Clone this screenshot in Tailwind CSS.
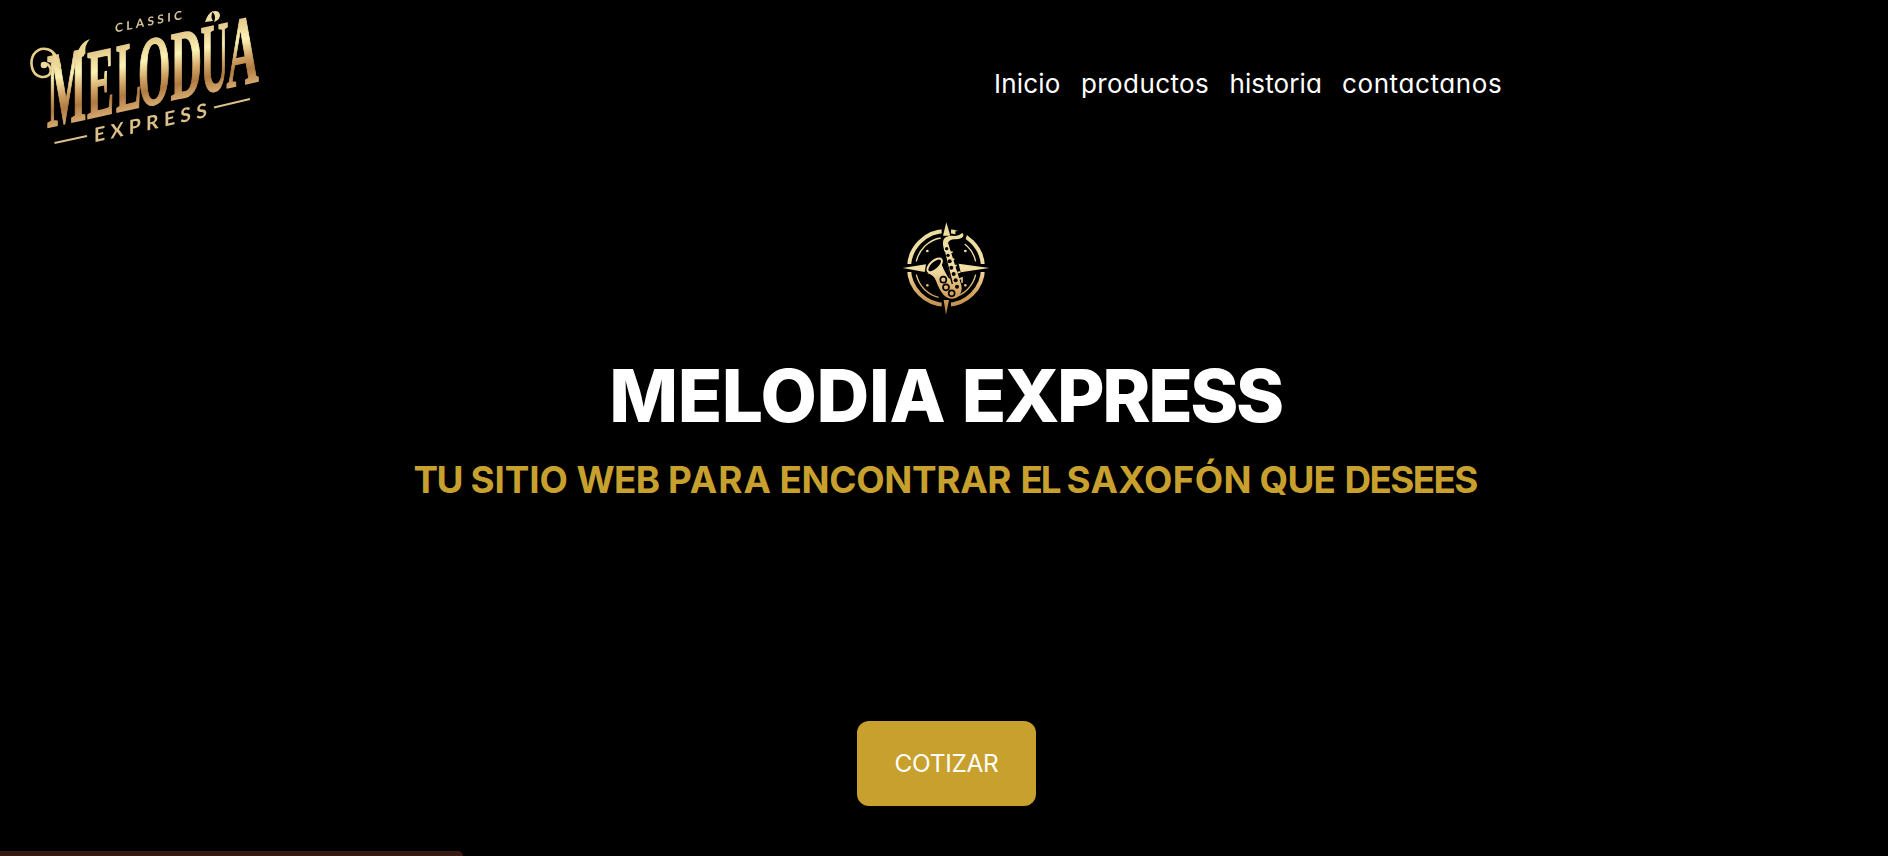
<!DOCTYPE html>
<html lang="es">
<head>
<meta charset="utf-8">
<title>Melodia Express</title>
<script src="https://cdn.jsdelivr.net/npm/@tailwindcss/browser@4"></script>
</head>
<body class="flex h-screen flex-col overflow-hidden bg-black font-[Inter,sans-serif] text-white">

<header class="flex h-[160px] shrink-0 items-start">
  <svg class="h-[160px] w-[280px] shrink-0 overflow-visible blur-[0.5px]" viewBox="0 0 280 160" role="img" aria-label="Classic Melodía Express">
    <defs>
      <linearGradient id="gold" gradientUnits="userSpaceOnUse" x1="0" y1="-66" x2="0" y2="0">
        <stop offset="0" stop-color="#e3c98a"/>
        <stop offset=".32" stop-color="#fdf3b4"/>
        <stop offset=".6" stop-color="#cfa062"/>
        <stop offset=".78" stop-color="#b07a40"/>
        <stop offset="1" stop-color="#d3a66c"/>
      </linearGradient>
    </defs>
    <!-- everything sits on a baseline that climbs to the right -->
    <g transform="matrix(1 -.22 0 1 0 137.8)" fill="url(#gold)" stroke="url(#gold)" stroke-width="1.600" font-family="'Liberation Serif',serif" font-weight="700" font-size="99">
      <text transform="translate(47 0) scale(.42 1.08)">M</text>
      <text transform="translate(87 0) scale(.41 1)">E</text>
      <text transform="translate(116 0) scale(.38 1)">L</text>
      <text transform="translate(138 0) scale(.42 1)">O</text>
      <text transform="translate(170.500 0) scale(.44 1)">D</text>
      <text transform="translate(200.500 0) scale(.39 1)">U</text>
      <text transform="translate(226.500 0) scale(.45 1)">A</text>
    </g>
    <!-- swashes of the M and the flame over the U -->
    <path d="M60 66C57 52 49 47.500 41 49C32 52 30 61 32.500 69C35 77 44 79 49 75C53 70 49 62 43 64" fill="none" stroke="#e6cd8b" stroke-width="2.600" stroke-linecap="round"/>
    <circle cx="44" cy="65" r="3.300" fill="#efdb9c"/>
    <path d="M50 50Q58 54 62 72L56 66Q54 56 50 50Z" fill="#ecd795"/>
    <path d="M76 60Q78 43 90 39Q85 44 84 56Z" fill="#ecd795"/>
    <path d="M205 22Q208 13 213 11Q210 17 213 21Z" fill="#efdfa4"/>
    <path d="M212 11.500Q219 9.500 220 15Q220 20 214 22Q217 16 212 11.500Z" fill="#efdfa4"/>
    <g transform="matrix(1 -.2 0 1 0 55.500)" fill="#d6c599" font-family="Lato,sans-serif" font-weight="700">
      <text x="115" y="0" font-size="12" textLength="67">CLASSIC</text>
    </g>
    <g transform="matrix(1 -.225 0 1 0 163.500)" fill="#dcc08a" font-family="Lato,sans-serif">
      <text x="94" y="0" font-size="19.500" font-weight="700" textLength="113">EXPRESS</text>
    </g>
    <path d="M54.500 143L87 136M214 107.500L250 99" stroke="#dcc08a" stroke-width="2"/>
  </svg>
  <nav class="ml-[714px] flex pt-[64px] text-[26px] leading-10 [font-feature-settings:'cv11']">
    <a class="w-[87px] tracking-[0.2px]">Inicio</a>
    <a class="w-[148.5px] tracking-[0.4px]">productos</a>
    <a class="w-[112.5px] tracking-[0.1px]">historia</a>
    <a class="tracking-[0.6px]">contactanos</a>
  </nav>
</header>

<main class="flex flex-1 flex-col items-center pt-[50px] pl-[5px]">
  <svg class="mr-[3px] h-[110px] w-[110px] shrink-0 blur-[0.3px]" viewBox="0 0 330 330" aria-hidden="true">
    <defs>
      <linearGradient id="brass" gradientUnits="userSpaceOnUse" x1="0" y1="40" x2="0" y2="310">
        <stop offset="0" stop-color="#e9dd9c"/>
        <stop offset=".5" stop-color="#f3dfa4"/>
        <stop offset=".75" stop-color="#d8a966"/>
        <stop offset="1" stop-color="#b88446"/>
      </linearGradient>
    </defs>
    <circle cx="168" cy="174" r="111" fill="none" stroke="url(#brass)" stroke-width="12"/>
    <g fill="none" stroke="url(#brass)" stroke-width="4">
      <path d="M79 154A91 91 0 0 1 152 84M79 194A91 91 0 0 0 146 262M190 262A91 91 0 0 0 257 194M257 154A91 91 0 0 0 224 102"/>
    </g>
    <!-- gaps in the ring for the compass points -->
    <path d="M155 36H183V86H155ZM155 264H183V316H155ZM36 162H84V186H36ZM250 162H300V186H250ZM196 64L220 62L232 70L224 98L196 90Z" fill="#000"/>
    <g fill="url(#brass)">
      <path d="M169 37L181 77H159ZM168 314L161 270H177ZM38 174L108 163L104 186ZM298 174L206 161L212 187Z"/>
      <circle cx="112" cy="123" r="4"/><circle cx="226" cy="123" r="4"/><circle cx="112" cy="226" r="4"/><circle cx="226" cy="226" r="4"/>
      <path d="M196 78Q208 76 217 69Q224 76 216 83Q209 87 200 88Q180 85 174 98L214 226Q219 252 198 264Q176 271 161 255Q148 240 138 212Q130 194 112 190L150 152Q160 178 174 202L181 208L160 110Q155 86 170 80Q182 75 196 78Z"/>
    </g>
    <ellipse cx="134" cy="166" rx="27" ry="13" transform="rotate(-42 134 166)" fill="#000" stroke="url(#brass)" stroke-width="6"/>
    <path d="M163 125L187 222" fill="none" stroke="#000" stroke-width="4"/>
    <path d="M183 115L214 205" fill="none" stroke="#000" stroke-width="3"/>
    <g fill="#000">
      <circle cx="170" cy="116" r="5"/><circle cx="174" cy="136" r="5"/><circle cx="179" cy="154" r="6"/><circle cx="184" cy="173" r="6"/><circle cx="191" cy="192" r="6"/><circle cx="197" cy="211" r="6"/><circle cx="201" cy="230" r="6"/>
    </g>
    <g fill="url(#brass)" stroke="#000" stroke-width="5">
      <circle cx="160" cy="209" r="9"/><circle cx="168" cy="232" r="9"/><circle cx="185" cy="250" r="9"/>
    </g>
    <path d="M180 128L188 126M186 149L193 147M192 168L200 166M202 188L211 186M207 208L216 204V218" fill="none" stroke="url(#brass)" stroke-width="5"/>
  </svg>

  <h1 class="mt-[26px] flex h-[100px] text-[73px] leading-[100px] font-extrabold">
    <span class="w-[352.6px] tracking-[-0.4px]">MELODIA</span>
    <span class="w-[322px] tracking-[-2.4px]">EXPRESS</span>
  </h1>

  <h2 class="mt-[4px] flex h-[60px] text-[36.8px] leading-[60px] font-bold text-[#c8a02e]">
    <span class="w-[57px] tracking-[-1.6px]">TU</span>
    <span class="w-[106px] tracking-[-0.1px]">SITIO</span>
    <span class="w-[91.5px] tracking-[-0.7px]">WEB</span>
    <span class="w-[111.5px] tracking-[1px]">PARA</span>
    <span class="w-[241px] tracking-[-0.3px]">ENCONTRAR</span>
    <span class="w-[46px] tracking-[-2px]">EL</span>
    <span class="w-[193px] tracking-[0.4px]">SAXOFÓN</span>
    <span class="w-[85px] tracking-[-0.7px]">QUE</span>
    <span class="w-[135px] tracking-[-1.6px]">DESEES</span>
  </h2>

  <button class="mt-[211px] h-[85px] w-[179px] shrink-0 rounded-xl bg-[#c8a02e] text-[24.4px] tracking-[-0.3px] text-white">COTIZAR</button>
</main>

<div class="h-[5px] w-[463px] shrink-0 rounded-tr-[5px] bg-[#361a13]"></div>
</body>
</html>
